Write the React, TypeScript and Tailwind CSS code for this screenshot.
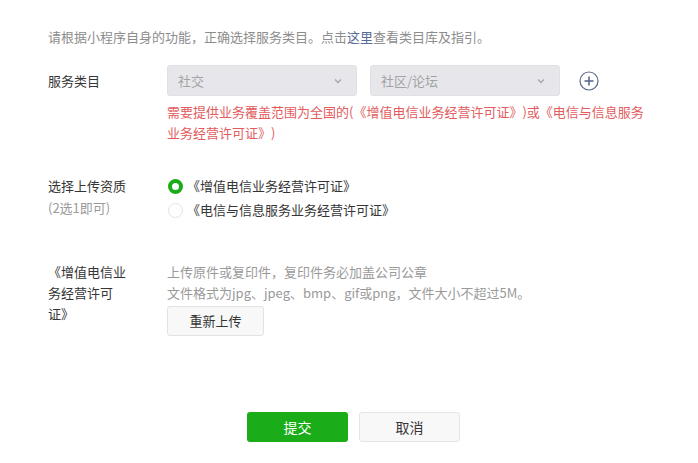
import React, { useState } from "react";

const font = { fontFamily: '"Noto Sans CJK SC", "Noto Sans", sans-serif' };

function Chevron() {
  return (
    <svg width="10" height="10" viewBox="0 0 10 10" fill="none" stroke="#a8a8a8" strokeWidth="1.4">
      <polyline points="2 3.5 5 6.5 8 3.5" />
    </svg>
  );
}

function Select({ value }: { value: string }) {
  return (
    <div className="flex items-center justify-between w-[190px] h-[31px] px-[10px] rounded-[3px] bg-[#e7e7eb] border border-[#e1e1e4] text-[#a3a3a3]">
      <span>{value}</span>
      <span className="mr-[3px] flex">
        <Chevron />
      </span>
    </div>
  );
}

function Radio({ checked, label, onClick }: { checked: boolean; label: string; onClick: () => void }) {
  return (
    <div className="flex items-center h-[24px] cursor-pointer" onClick={onClick}>
      {checked ? (
        <span className="w-[15px] h-[15px] rounded-full border-[4px] border-[#1aad19] bg-white ml-[1px]" />
      ) : (
        <span className="w-[15px] h-[15px] rounded-full border border-[#e3e3e3] bg-white ml-[1px]" />
      )}
      <span className="ml-[4px] text-[#353535]">{label}</span>
    </div>
  );
}

export default function App() {
  const [cert, setCert] = useState(0);

  return (
    <div
      className="w-[698px] h-[463px] bg-white text-[13px] pt-[26px] pl-[48px] [text-spacing-trim:space-all]"
      style={font}
    >
      <p className="leading-[21px] text-[#8d8d8d]">
        请根据小程序自身的功能，正确选择服务类目。点击<span className="text-[#576b95]">这里</span>查看类目库及指引。
      </p>

      {/* 服务类目 */}
      <div className="flex mt-[18px]">
        <div className="w-[119px] leading-[31px] text-[#353535]">服务类目</div>
        <div>
          <div className="flex items-center">
            <Select value="社交" />
            <div className="ml-[13px]">
              <Select value="社区/论坛" />
            </div>
            <svg className="ml-[19px]" width="20" height="20" viewBox="0 0 20 20" fill="none" stroke="#5b6a8c">
              <circle cx="10" cy="10" r="9" strokeWidth="1.2" />
              <line x1="10" y1="5.5" x2="10" y2="14.5" strokeWidth="1.6" />
              <line x1="5.5" y1="10" x2="14.5" y2="10" strokeWidth="1.6" />
            </svg>
          </div>
          <p className="mt-[5px] w-[484px] leading-[21px] text-[#e25c5e]">
            需要提供业务覆盖范围为全国的(《增值电信业务经营许可证》)或《电信与信息服务业务经营许可证》)
          </p>
        </div>
      </div>

      {/* 选择上传资质 */}
      <div className="flex mt-[32px]">
        <div className="w-[119px] leading-[22px] text-[#353535]">
          <div>选择上传资质</div>
          <div className="text-[#9a9a9a]">(2选1即可)</div>
        </div>
        <div className="-mt-[1px]">
          <Radio checked={cert === 0} label="《增值电信业务经营许可证》" onClick={() => setCert(0)} />
          <Radio checked={cert === 1} label="《电信与信息服务业务经营许可证》" onClick={() => setCert(1)} />
        </div>
      </div>

      {/* 上传 */}
      <div className="flex mt-[39px]">
        <div className="w-[84px] mr-[35px] leading-[21px] text-[#353535]">《增值电信业务经营许可证》</div>
        <div>
          <p className="leading-[21px] text-[#9a9a9a]">上传原件或复印件，复印件务必加盖公司公章</p>
          <p className="leading-[21px] text-[#9a9a9a]">文件格式为jpg、jpeg、bmp、gif或png，文件大小不超过5M。</p>
          <button className="mt-[3px] w-[97px] h-[30px] rounded-[3px] border border-[#e2e2e2] bg-[#f8f8f8] text-[#353535]">
            重新上传
          </button>
        </div>
      </div>

      <div className="flex mt-[76px] ml-[199px]">
        <button className="w-[101px] h-[30px] rounded-[3px] bg-[#1aad19] text-white text-[14px]">提交</button>
        <button className="ml-[11px] w-[101px] h-[30px] rounded-[3px] border border-[#e5e5e5] bg-[#f8f8f8] text-[#353535] text-[14px]">
          取消
        </button>
      </div>
    </div>
  );
}
